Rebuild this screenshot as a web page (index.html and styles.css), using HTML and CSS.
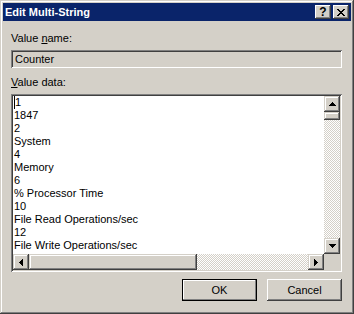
FILE: index.html
```html
<!DOCTYPE html>
<html lang="en">
<head>
    <meta charset="UTF-8">
    <title>Edit Multi-String</title>
    <link rel="stylesheet" href="styles.css">
</head>
<body>
    <div class="window">
        <div class="titlebar">
            <span class="title">Edit Multi-String</span>
            <div class="caption-buttons">
                <div class="cap-btn help">?</div>
                <div class="cap-btn">
                    <svg width="8" height="7" viewBox="0 0 8 7" shape-rendering="crispEdges">
                        <path d="M0 0h2v1H0zM6 0h2v1H6zM1 1h2v1H1zM5 1h2v1H5zM2 2h4v1H2zM3 3h2v1H3zM2 4h4v1H2zM1 5h2v1H1zM5 5h2v1H5zM0 6h2v1H0zM6 6h2v1H6z" fill="#000"/>
                    </svg>
                </div>
            </div>
        </div>

        <div class="dialog">
            <div class="label">Value <u>n</u>ame:</div>
            <div class="field">Counter</div>

            <div class="label second"><u>V</u>alue data:</div>
            <div class="editbox">
                <div class="edit-main">
                    <div class="lines"><div><span class="caret"></span>1</div><div>1847</div><div>2</div><div>System</div><div>4</div><div>Memory</div><div>6</div><div>% Processor Time</div><div>10</div><div>File Read Operations/sec</div><div>12</div><div>File Write Operations/sec</div></div>
                    <div class="vscroll">
                        <div class="sb-btn">
                            <svg width="7" height="4" viewBox="0 0 7 4" shape-rendering="crispEdges"><path d="M3 0h1v1H3zM2 1h3v1H2zM1 2h5v1H1zM0 3h7v1H0z"/></svg>
                        </div>
                        <div class="sb-thumb v"></div>
                        <div class="sb-track"></div>
                        <div class="sb-btn">
                            <svg width="7" height="4" viewBox="0 0 7 4" shape-rendering="crispEdges"><path d="M0 0h7v1H0zM1 1h5v1H1zM2 2h3v1H2zM3 3h1v1H3z"/></svg>
                        </div>
                    </div>
                </div>
                <div class="hscroll">
                    <div class="sb-btn">
                        <svg width="4" height="7" viewBox="0 0 4 7" shape-rendering="crispEdges"><path d="M3 0h1v7H3zM2 1h1v5H2zM1 2h1v3H1zM0 3h1v1H0z"/></svg>
                    </div>
                    <div class="sb-thumb h"></div>
                    <div class="sb-track"></div>
                    <div class="sb-btn">
                        <svg width="4" height="7" viewBox="0 0 4 7" shape-rendering="crispEdges"><path d="M0 0h1v7H0zM1 1h1v5H1zM2 2h1v3H2zM3 3h1v1H3z"/></svg>
                    </div>
                    <div class="corner"></div>
                </div>
            </div>

            <div class="actions">
                <div class="push default">OK</div>
                <div class="push">Cancel</div>
            </div>
        </div>
    </div>
</body>
</html>
```

FILE: styles.css
```css
body {
    margin: 0;
    font-family: "Liberation Sans", Arial, sans-serif;
    font-size: 11px;
    color: #000;
}
.window {
    width: 354px;
    height: 314px;
    box-sizing: border-box;
    padding: 3px;
    background-color: #d4d0c8;
    box-shadow: inset -1px -1px #404040, inset 1px 1px #d4d0c8,
                inset -2px -2px #808080, inset 2px 2px #fff;
}
.titlebar {
    height: 18px;
    background-color: #0a246a;
    display: flex;
    align-items: center;
    justify-content: space-between;
}
.title {
    color: #fff;
    font-weight: bold;
    padding-left: 2px;
    line-height: 13px;
}
.caption-buttons {
    display: flex;
    gap: 2px;
    padding-right: 2px;
}
.cap-btn {
    width: 16px;
    height: 14px;
    background-color: #d4d0c8;
    display: flex;
    align-items: center;
    justify-content: center;
    box-shadow: inset -1px -1px #404040, inset 1px 1px #fff,
                inset -2px -2px #808080;
}
.cap-btn.help {
    font-weight: bold;
    font-size: 12px;
    line-height: 14px;
}
.dialog {
    padding: 11px 9px 0 8px;
    display: flex;
    flex-direction: column;
}
.label {
    line-height: 13px;
}
.label.second {
    margin-top: 8px;
}
.field {
    margin-top: 5px;
    height: 18px;
    box-sizing: border-box;
    padding: 3px 4px 0 4px;
    line-height: 13px;
    box-shadow: inset 1px 1px #808080, inset -1px -1px #fff,
                inset 2px 2px #404040, inset -2px -2px #d4d0c8;
}
.editbox {
    margin-top: 5px;
    height: 178px;
    box-sizing: border-box;
    padding: 2px;
    display: flex;
    flex-direction: column;
    box-shadow: inset 1px 1px #808080, inset -1px -1px #fff,
                inset 2px 2px #404040, inset -2px -2px #d4d0c8;
}
.edit-main {
    display: flex;
    height: 158px;
}
.lines {
    flex: 1;
    background-color: #fff;
    padding-left: 1px;
    line-height: 13px;
    white-space: nowrap;
    overflow: hidden;
}
.caret {
    display: inline-block;
    width: 1px;
    height: 13px;
    background-color: #000;
    vertical-align: top;
}
.vscroll {
    width: 16px;
    display: flex;
    flex-direction: column;
}
.hscroll {
    height: 16px;
    display: flex;
}
.sb-btn {
    width: 16px;
    height: 16px;
    flex: none;
    background-color: #d4d0c8;
    display: flex;
    align-items: center;
    justify-content: center;
    box-shadow: inset -1px -1px #404040, inset 1px 1px #d4d0c8,
                inset -2px -2px #808080, inset 2px 2px #fff;
}
.sb-thumb {
    flex: none;
    background-color: #d4d0c8;
    box-shadow: inset -1px -1px #404040, inset 1px 1px #d4d0c8,
                inset -2px -2px #808080, inset 2px 2px #fff;
}
.sb-thumb.v {
    height: 8px;
}
.sb-thumb.h {
    width: 168px;
}
.sb-track {
    flex: 1;
    background-image: conic-gradient(#fff 25%, #d4d0c8 0 50%, #fff 0 75%, #d4d0c8 0);
    background-size: 2px 2px;
}
.corner {
    width: 16px;
    flex: none;
    background-color: #d4d0c8;
}
.actions {
    margin-top: 7px;
    display: flex;
    justify-content: flex-end;
    gap: 10px;
}
.push {
    width: 75px;
    height: 22px;
    box-sizing: border-box;
    display: flex;
    align-items: center;
    justify-content: center;
    box-shadow: inset -1px -1px #404040, inset 1px 1px #fff,
                inset -2px -2px #808080;
}
.push.default {
    box-shadow: inset 0 0 0 1px #000, inset -2px -2px #808080,
                inset 2px 2px #fff;
}
```
